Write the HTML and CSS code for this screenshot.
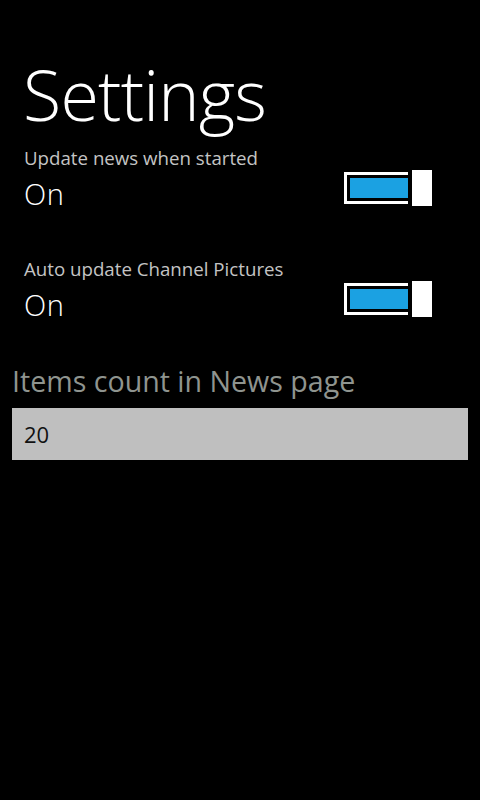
FILE: index.html
```html
<!DOCTYPE html>
<html>
<head>
<meta charset="utf-8">
<link rel="stylesheet" href="styles.css">
</head>
<body>
<div class="page">
  <h1 class="title">Settings</h1>
  <div class="setting">
    <div class="label">Update news when started</div>
    <div class="value">On</div>
    <div class="toggle"><div class="track"><div class="fill"></div></div><div class="thumb"></div></div>
  </div>
  <div class="setting">
    <div class="label">Auto update Channel Pictures</div>
    <div class="value">On</div>
    <div class="toggle"><div class="track"><div class="fill"></div></div><div class="thumb"></div></div>
  </div>
  <div class="items">
    <div class="items-heading">Items count in News page</div>
    <div class="textbox">20</div>
  </div>
</div>
</body>
</html>
```
FILE: styles.css
```css
html, body {
  margin: 0;
  padding: 0;
  background: #000;
  width: 480px;
  height: 800px;
  overflow: hidden;
}
body {
  font-family: "Open Sans", "Noto Sans", sans-serif;
  color: #fff;
}
.page {
  padding: 58px 12px 0 12px;
}
.title {
  margin: 0 0 16px 11px;
  font-size: 70px;
  line-height: 72px;
  font-weight: 300;
  letter-spacing: -0.8px;
}
.setting {
  display: grid;
  grid-template-columns: 1fr auto;
  margin: 0 36px 39px 12px;
}
.label {
  grid-column: 1 / 3;
  font-size: 18.7px;
  line-height: 24px;
  color: #c4c4c4;
}
.value {
  font-size: 29px;
  line-height: 48px;
  font-weight: 300;
  letter-spacing: 0.5px;
}
.toggle {
  display: flex;
  align-items: center;
  gap: 4px;
  height: 36px;
}
.track {
  box-sizing: border-box;
  width: 64px;
  height: 32px;
  border: 3px solid #fff;
  border-right: none;
  padding: 3px 0 3px 3px;
}
.fill {
  height: 20px;
  background: #1ba1e2;
}
.thumb {
  width: 20px;
  height: 36px;
  background: #fff;
}
.items {
  margin-top: -7px;
}
.items-heading {
  font-size: 28.6px;
  line-height: 40px;
  color: #8f948f;
  margin-bottom: 7px;
}
.textbox {
  height: 52px;
  line-height: 52px;
  background: #bfbfbf;
  color: #111;
  font-size: 22px;
  padding-left: 12px;
}
```
